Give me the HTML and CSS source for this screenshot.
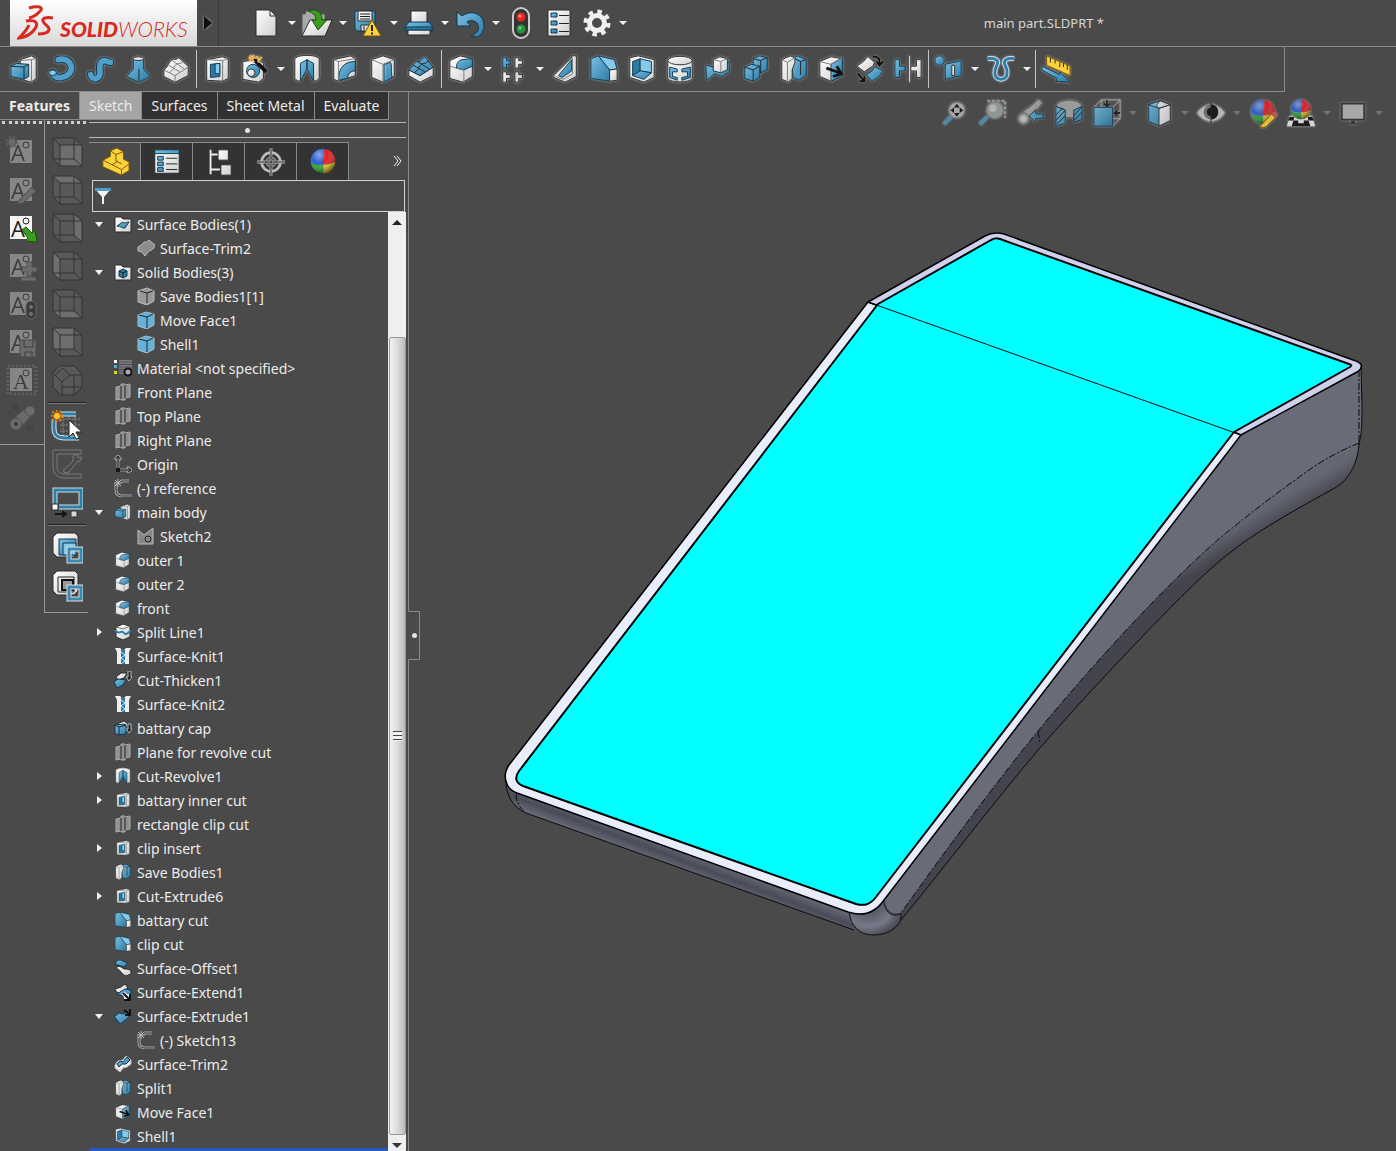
FILE: index.html
```html
<!DOCTYPE html>
<html lang="en">
<head>
<meta charset="utf-8">
<meta name="viewport" content="width=device-width, initial-scale=1">
<title>main part.SLDPRT *</title>
<link rel="stylesheet" href="styles.css">
</head>
<body>
<svg class="sprite" aria-hidden="true">
  <defs>
    <linearGradient id="steel" x1="0" y1="0" x2="1" y2="1"><stop offset="0" stop-color="#7cc0e2"/><stop offset="1" stop-color="#2b7ba6"/></linearGradient>
    <linearGradient id="paper" x1="0" y1="0" x2="1" y2="1"><stop offset="0" stop-color="#ffffff"/><stop offset="1" stop-color="#cfcfcf"/></linearGradient>
    <radialGradient id="shine" cx=".35" cy=".25" r=".8"><stop offset="0" stop-color="#fff" stop-opacity=".45"/><stop offset=".4" stop-color="#fff" stop-opacity="0"/><stop offset="1" stop-color="#000" stop-opacity=".6"/></radialGradient>
  </defs>
  <symbol id="new" viewBox="0 0 32 32"><path class="w" d="M6 3h14l6 6v20H6z"/><path class="w" d="M20 3v6h6z"/></symbol>
  <symbol id="open" viewBox="0 0 32 32"><path class="g" d="M1 29V7h3l1-3h7l2 3h10v5z"/><path class="w" d="M1 29L9 13h22l-7 16z"/><path class="green" d="M7 4c8-3 14 0 14 9h5l-9 10-6-10h4c0-5-3-7-8-9z"/></symbol>
  <symbol id="save" viewBox="0 0 32 32"><path class="b" d="M3 4h20v20H5l-2-2z"/><path class="w" d="M6 4h14v10H6zM9 18h9v6H9z"/><path class="k" d="M8 7h10M8 9.500h10M8 12h10M12 19v4"/><path class="y" d="M20 13l9 16H11z"/><path class="k thick" d="M20 18v6M20 25.500v2"/></symbol>
  <symbol id="print" viewBox="0 0 32 32"><path class="w" d="M8 4h16v13H8z"/><path class="b" d="M6 15h20l4 5v4H2v-4z"/><path class="w" d="M5 23h22v5H5z"/><path class="d" d="M3 20h26v3H3z"/></symbol>
  <symbol id="undo" viewBox="0 0 32 32"><path class="b" d="M3 5l5 4c10-7 22-2 22 10 0 5-3 9-7 11l-6-1c8-3 9-9 6-13-3-3-7-3-10-1l4 4H3z"/></symbol>
  <symbol id="traffic" viewBox="0 0 32 32"><rect x="8" y="1" width="16" height="30" rx="8" fill="#333" stroke="#ccc" stroke-width="2"/><circle cx="16" cy="10" r="4.500" fill="#e3261e"/><circle cx="16" cy="22" r="4.500" fill="#239440"/><circle cx="15" cy="9" r="1.500" fill="#ff9a8e"/><circle cx="15" cy="21" r="1.500" fill="#7ad090"/></symbol>
  <symbol id="options" viewBox="0 0 32 32"><path class="w" d="M5 3h22v26H5z"/><path class="b" d="M8 6h6v4H8zM8 14h6v4H8zM8 22h6v4H8z"/><path class="k" d="M16 8.500h10M16 16.500h10M16 24.500h10"/></symbol>
  <symbol id="gear" viewBox="0 0 32 32"><circle cx="16" cy="16" r="11" fill="none" stroke="#f0f0f0" stroke-width="5" stroke-dasharray="4.320 4.320"/><circle cx="16" cy="16" r="7.500" fill="none" stroke="#f0f0f0" stroke-width="5"/></symbol>

  <symbol id="extrude" viewBox="0 0 32 32"><path class="w" d="M12 6l12-4 5 3v21l-5 4-12-3z"/><path class="f" d="M24 30V6l5-1M24 6L12 7"/><path class="b" d="M2 13l6-3 13 1v13l-5 3-14-3z"/><path class="k" d="M2 13l14 1 5-3M16 14v13"/></symbol>
  <symbol id="revolve" viewBox="0 0 32 32"><path class="tube1" d="M12 6c16-4 20 17 3 19-4 1-8-1-9-5"/><path class="tube2" d="M12 6c16-4 20 17 3 19-4 1-8-1-9-5"/><ellipse class="l" cx="6" cy="20" rx="4" ry="3"/></symbol>
  <symbol id="sweep" viewBox="0 0 32 32"><path class="tube1" d="M6 22c1 6 10 6 10-2 0-5-2-12 5-13l6 2"/><path class="tube2" d="M6 22c1 6 10 6 10-2 0-5-2-12 5-13l6 2"/></symbol>
  <symbol id="loft" viewBox="0 0 32 32"><path class="b" d="M11 5h11v11l7 8-12 6-13-6 7-8z"/><ellipse class="w" cx="16.500" cy="5" rx="5.500" ry="2"/><path class="k" d="M17 29V16"/></symbol>
  <symbol id="boundary" viewBox="0 0 32 32"><path class="w" d="M3 17c5-3 5-9 9-11 4-1 3 1 7-2l10 9v10l-14 7L3 24z"/><path class="f" d="M3 17l12 6 14-9M15 23v7M8 12l12 7M12 7l13 9M9 20c6-4 4-9 10-10 4 0 4-2 5-2"/></symbol>
  <symbol id="cutextrude" viewBox="0 0 32 32"><path class="w" d="M5 6l17-3 6 2v21l-6 3-17-1z"/><path class="f" d="M5 6l17 1 6-2M22 7v22"/><path class="d" d="M9 11l10-1v14l-10 1z"/><path class="l" d="M14 10.500l5-.5v11h-5z"/></symbol>
  <symbol id="hole" viewBox="0 0 32 32"><path class="w" d="M3 8l16-2 6 4v16l-5 4-17-3z"/><circle class="b" cx="14" cy="18" r="7"/><circle class="w" cx="12" cy="20" r="4"/><path d="M14 5l14 14" stroke="#111" stroke-width="4"/><path d="M9 4h8M11 1l4 8M15 1l-5 7M18 2l2 5M23 3l-4 6" stroke="#f2b24d" stroke-width="2"/></symbol>
  <symbol id="cutrevolve" viewBox="0 0 32 32"><path class="w" d="M3 6c0-6 26-6 26 0v20c-2 2-4 3-6 3L16 14 9 29c-2 0-5-1-6-3z"/><path class="b" d="M9 10l7-4v10L9 29zM23 10l-7-4v10l7 13z"/></symbol>
  <symbol id="cutsweep" viewBox="0 0 32 32"><path class="w" d="M4 6l18-4 5 3v18l-9 3-9 3-5-2z"/><path class="b" d="M9 28C9 15 15 8 27 8v10c-5 0-8 3-8 8z"/><path class="f" d="M4 6l5 2 18-3M9 8v20"/></symbol>
  <symbol id="cutloft" viewBox="0 0 32 32"><path class="w" d="M4 6l12-4 12 4v18l-12 6-12-5z"/><path class="b" d="M17 11l7-2c2 3 0 11 2 16l-9 5z"/><path class="f" d="M4 6l12 5 12-5M16 11v19M20 10c2 6 0 12 1 17"/></symbol>
  <symbol id="cutboundary" viewBox="0 0 32 32"><path class="w" d="M3 17l12 6 14-9v9l-14 7-12-7z"/><path class="b" d="M3 17c5-3 5-9 9-9 4 1 5-3 8-5l9 11-14 9z"/><path class="k" d="M8 12l12 7M12 8l13 8M9 20c6-4 4-9 10-10 4 0 4-3 5-3"/></symbol>
  <symbol id="fillet" viewBox="0 0 32 32"><path class="w" d="M3 7l11-5 13 3v19l-10 6-14-4z"/><path class="b" d="M10 15c0-5 2-8 6-9l11-1v8l-9 4z"/><path class="f" d="M3 13l7 2 8 2v13"/></symbol>
  <symbol id="pattern" viewBox="0 0 32 32"><path class="b" d="M4 4h4v3h4v4H8v4H4z"/><path class="w" d="M17 4h4v3h4v4h-4v4h-4zM4 19h4v3h4v4H8v4H4zM17 19h4v3h4v4h-4v4h-4z"/></symbol>
  <symbol id="rib" viewBox="0 0 32 32"><path class="w" d="M3 23L22 4V2h5v22l-12 6-12-5z"/><path class="b" d="M8 23L22 6v12l-10 7z"/><path class="f" d="M23 4v17l-10 6-8-3"/></symbol>
  <symbol id="draft" viewBox="0 0 32 32"><path class="b" d="M2 5l8-3 12 15v12L2 26z"/><path class="l" d="M10 2l17 4 3 10-8 1z"/><path class="w" d="M22 17l8-1v12l-8 1z"/></symbol>
  <symbol id="shell" viewBox="0 0 32 32"><path class="w" d="M3 4l9-2 17 4v19l-11 5-15-5z"/><path class="d" d="M6 8l8-3v13l-8 5z"/><path class="l" d="M14 5l12 3v12l-12-2z"/><path class="b" d="M6 23l8-5 12 2-8 7z"/></symbol>
  <symbol id="wrap" viewBox="0 0 32 32"><path class="w" d="M3 7v19c3 5 23 5 26 0V7z"/><ellipse class="w" cx="16" cy="7" rx="13" ry="4.500"/><path class="b" d="M5 14l8 2v3H8v5l5 1v3l-8-3zM27 14l-9 2v3h6v5l-6 1v3l9-3z"/></symbol>
  <symbol id="intersect" viewBox="0 0 32 32"><path class="b" d="M3 12l9 2 8-2 8-4v11l-8 5-8-3-8 7z"/><path class="w" d="M11 6l7-3 8 2v12l-7 3-8-2z"/><path class="f" d="M11 6l8 2 7-3M19 8v12"/></symbol>
  <symbol id="combine" viewBox="0 0 32 32"><path class="b" d="M13 5l7-3 8 2v13l-7 3-8-2z"/><path class="b" d="M4 14l7-3 9 2v12l-7 4-9-3z"/><path class="k" d="M13 5l8 2 7-3M21 7v13M4 14l9 3 7-4M13 17v12"/></symbol>
  <symbol id="split" viewBox="0 0 32 32"><path class="b" d="M13 5l7-3 9 4v17l-8 5-6-3z"/><path class="w" d="M3 6l9-4 5 2v5l-3 8v9l-4 4-7-3z"/><path class="k" d="M17 5l6 3 6-2M23 8v14"/><path class="f" d="M3 6l6 3 8-5M9 9v21"/></symbol>
  <symbol id="moveface" viewBox="0 0 32 32"><path class="w" d="M3 8l12-5 12 2v18l-12 6-12-5z"/><path class="b" d="M15 11l12-7v19l-12 6z"/><path class="f" d="M3 8l12 3 12-7M15 11v18"/><path d="M10 15l14 5M21 13l5 8-9 3" fill="none" stroke="#111" stroke-width="3"/></symbol>
  <symbol id="flex" viewBox="0 0 32 32"><path class="w" d="M2 13l7-5c2-1 3-5 5-5l7 6c-2 2-1 5-4 5l-7 5z"/><path class="b" d="M12 22l5-3c3-1 2-5 5-5l8 4c-3 2-3 6-6 7l-6 4z"/><path d="M19 3c5-1 8 2 7 8M23 8l3 4 4-4M3 21l7 8M10 24v5H5" fill="none" stroke="#111" stroke-width="2"/></symbol>
  <symbol id="mirror" viewBox="0 0 32 32"><path class="b" d="M2 6h5v7h6v5H7v7H2z"/><path class="w" d="M30 6h-5v7h-6v5h6v7h5z"/><path class="k" d="M16 2v28"/><path d="M17.500 2v28" stroke="#ddd"/></symbol>
  <symbol id="refgeo" viewBox="0 0 32 32"><circle class="b" cx="6" cy="7" r="5"/><path class="b" d="M12 11l17-4v16l-17 4z"/><path class="w" d="M19 12h3v11h-3z"/></symbol>
  <symbol id="curves" viewBox="0 0 32 32"><path class="c1" d="M2 5c7-1 12 1 10 6-3 6-5 15 4 16 9-1 7-10 4-16-2-5 3-7 10-6"/><path class="c2" d="M2 5c7-1 12 1 10 6-3 6-5 15 4 16 9-1 7-10 4-16-2-5 3-7 10-6"/></symbol>
  <symbol id="instant" viewBox="0 0 32 32"><path class="y" d="M6 2l25 11v10L6 12z"/><path class="k" d="M10 4v5M15 6v4M20 9v5M24 10v4M28 12v5"/><path class="b" d="M1 13l19 9v-3l11 11-15-1 1-3L1 17z"/></symbol>

  <symbol id="zoomfit" viewBox="0 0 32 32"><path d="M4 28l8-8" stroke="#4c98bd" stroke-width="4"/><circle cx="18" cy="13" r="8.500" fill="#b8b8b8" stroke="#777"/><path class="kf" d="M18 6l3 4h-6zM18 20l3-4h-6zM11 13l4-3v6zM25 13l-4-3v6z"/></symbol>
  <symbol id="zoomarea" viewBox="0 0 32 32"><path d="M10 3h19v18" fill="none" stroke="#aaa" stroke-width="2" stroke-dasharray="3 2"/><path d="M2 28l8-8" stroke="#4c98bd" stroke-width="4"/><circle cx="18" cy="13" r="9" fill="#9ba5a2" stroke="#777"/><circle cx="16" cy="11" r="4" fill="#c2c8c6"/></symbol>
  <symbol id="prevview" viewBox="0 0 32 32"><path class="g" d="M3 18L19 6l5-5 4 4-4 6-4 2-10 14z"/><circle class="g" cx="8" cy="22" r="6"/><circle cx="8" cy="22" r="3" fill="#ccc"/><path class="b" d="M14 19l7-6v4h8v5h-8v4z"/></symbol>
  <symbol id="section" viewBox="0 0 32 32"><path class="g" d="M2 9c3-9 25-9 28 0l-8 4v8H11v-9z"/><path class="b" d="M2 9l10 4v14l-10 3zM21 13l9-4v14l-9 3z"/><path class="k" d="M2 18l7-7M2 24l10-11M3 28l9-9M21 19l8-9M21 24l9-9"/></symbol>
  <symbol id="vieworient" viewBox="0 0 32 32"><path class="wire hi" d="M2 10L10 2h20v20l-8 8M10 2v8M22 10l8-8M22 22h8"/><path class="b" d="M2 10h20v20H2z"/><path class="k thick" d="M16 2v7M13 6l3 3 3-3M30 16h-6M27 13l-3 3 3 3"/></symbol>
  <symbol id="display" viewBox="0 0 32 32"><path class="b" d="M5 7l12-4 11 4v17l-11 6-12-5z"/><path class="w" d="M16 11l12-4v17l-12 6z"/><path class="l" d="M5 7l12-4 11 4-12 4z"/><path class="w" d="M17 3l11 4-12 4-3-3z"/></symbol>
  <symbol id="eye" viewBox="0 0 32 32"><path d="M1 16C9 4 23 4 31 16 23 28 9 28 1 16z" fill="#ccc" stroke="#888"/><circle cx="16" cy="15" r="8" fill="#777"/><circle cx="16" cy="15" r="4.500" fill="#111"/><path class="kf" d="M16 7c10 0 10 16 0 16z"/><path class="k" d="M16 4v25"/></symbol>
  <symbol id="sphere" viewBox="0 0 32 32"><path fill="#2f62d0" d="M18 2A13 13 0 0 0 3 17q6 3 13 2Q15 10 18 2z"/><path fill="#e31c23" d="M18 2A13 13 0 0 1 29 16q-6 3-13 3Q15 10 18 2z"/><path fill="#25a52f" d="M3 17A13 13 0 0 0 16 28q1-4 0-9-7 1-13-2z"/><path fill="#e8cb25" d="M29 16A13 13 0 0 1 16 28q1-4 0-9 7 0 13-3z"/><circle cx="16" cy="15" r="13" fill="url(#shine)"/></symbol>
  <symbol id="appearance" viewBox="0 0 32 32"><use href="#sphere"/><path class="y" d="M14 29l11-12 4 4-10 10-6 1z"/><path fill="#d8584a" d="M25 17l3-3 4 4-3 3z"/></symbol>
  <symbol id="scene" viewBox="0 0 32 32"><path fill="#eee" d="M4 19h24l3 11H1z"/><path class="kf" d="M4 20h5l-1 4H2zM23 20h5l2 4h-6zM8 24h5v6H6zM19 24h5l2 6h-7zM13 27h6v3h-6z"/><use href="#sphere" x="3" y="0" width="26" height="26"/></symbol>
  <symbol id="monitor" viewBox="0 0 32 32"><path d="M4 6h24v17H4z" fill="#b8b8b8" stroke="#333" stroke-width="2"/><path fill="#333" d="M14 24h4v3h3v1H11v-1h3z"/></symbol>

  <symbol id="note" viewBox="0 0 32 32"><path class="wp" d="M4 4h22v23H4z"/><circle class="k" cx="20" cy="9" r="3"/></symbol>
  <symbol id="spark" viewBox="0 0 32 32"><circle cx="6" cy="6" r="4" class="g"/><circle cx="6" cy="6" r="5" fill="none" stroke="#888" stroke-width="2" stroke-dasharray="2 2"/></symbol>
  <symbol id="pencil" viewBox="0 0 32 32"><path class="g" d="M12 27l14-14 4 4-13 12-6 1z"/></symbol>
  <symbol id="garrow" viewBox="0 0 32 32"><path class="green" d="M16 18l4-3 6 6 3-3 2 12-12-1 3-3z"/></symbol>
  <symbol id="plusminus" viewBox="0 0 32 32"><path class="g" d="M21 12h5v5h5v5h-5v4h-5v-4h-5v-5h5zM15 27h15v4H15z"/></symbol>
  <symbol id="link" viewBox="0 0 32 32"><rect x="20" y="13" width="10" height="18" rx="5" fill="#222" stroke="#999"/><circle fill="#bbb" cx="25" cy="19" r="2"/><circle fill="#bbb" cx="25" cy="26" r="2"/></symbol>
  <symbol id="disk" viewBox="0 0 32 32"><path class="g" d="M14 14h16v17H16l-2-2z"/><path class="k" d="M18 14v7h9v-7M19 31v-5h7v5"/></symbol>
  <symbol id="stamp" viewBox="0 0 32 32"><path d="M2 2h28v28H2z" fill="none" stroke="#888" stroke-width="3" stroke-dasharray="2 2"/></symbol>
  <symbol id="explode" viewBox="0 0 32 32"><path class="k" d="M3 12l7-7M6 4h5v5M30 20l-7 7M27 28h-5v-5"/><path class="g" d="M7 17L22 4l5 8L14 26z"/><circle class="g" cx="24" cy="9" r="5"/><circle class="g" cx="10" cy="22" r="6"/><circle class="kf" cx="10" cy="22" r="2"/></symbol>
  <symbol id="cube" viewBox="0 0 32 32"><path fill="#aaa" fill-opacity=".3" d="M2 2h21l8 7v21H9l-7-7z"/><path class="wire" d="M2 2h21v21H2zM9 9h22v21H9zM2 2l7 7M23 2l8 7M2 23l7 7M23 23l8 7"/></symbol>
  <symbol id="isocube" viewBox="0 0 32 32"><path fill="#aaa" fill-opacity=".3" d="M8 2h15l8 8v13l-8 8H10l-8-8V9z"/><path class="wire" d="M8 2h15l8 8v13l-8 8H10l-8-8V9zM12 4l7 7-8 7-7-7zM19 11h12M11 18v13M23 11v12h8M11 23h12v8"/></symbol>
  <symbol id="sketch" viewBox="0 0 32 32"><path d="M9 9h20M9 15h20M9 21h20M12 6v20M18 6v20M24 6v20" stroke="#888" stroke-dasharray="2 1"/><path class="c1" d="M3 10v8c0 7 3 10 11 10h14M10 4h15"/><path class="c2" d="M3 10v8c0 7 3 10 11 10h14M10 4h15"/><circle cx="6" cy="6" r="5.500" fill="none" stroke="#e08a12" stroke-width="2" stroke-dasharray="2 2"/><circle cx="6" cy="6" r="3.500" fill="#ffc534" stroke="#c76a00"/><path d="M18 10v17l4-4 3 6 3-1-3-6h6z" fill="#fff" stroke="#222"/></symbol>
  <symbol id="repair" viewBox="0 0 32 32"><path class="wire lite" d="M30 2H2v16c0 8 4 12 12 12h16v-4H15c-6 0-9-2-9-8V6h24zM12 22l2 3 4-1 8-10 3-1 2-4-4 1-1-4-4 2v5l-8 8z"/></symbol>
  <symbol id="rapid" viewBox="0 0 32 32"><path class="c1" d="M4 18V4h26v17H8"/><path class="c2" d="M4 18V4h26v17H8"/><path class="w" d="M1 18h6v6H1zM20 25h6v6h-6z"/><path class="kf" d="M4 27h7v-3l6 4-6 4v-3H4z"/></symbol>
  <symbol id="group1" viewBox="0 0 32 32"><path class="w" d="M2 5l4-4h18l3 3v17l-4 4H6l-4-4z"/><path class="b" d="M8 7h17v16H8z"/><path class="l" d="M12 11h13v12H12z"/><path class="c4" d="M18 17h12v12H18z"/><path class="c3" d="M18 17h12v12H18z"/></symbol>
  <symbol id="group2" viewBox="0 0 32 32"><path class="w" d="M2 5l4-4h18l3 3v17l-4 4H6l-4-4z"/><path class="k" d="M7 7h16v15H7z"/><path fill="#999" stroke="#111" stroke-width="2" d="M11 10h11v10H11z"/><path class="c4" d="M18 17h12v12H18z"/><path class="c3" d="M18 17h12v12H18z"/></symbol>

  <symbol id="part" viewBox="0 0 32 32"><path class="y" d="M3 14l8-4V4l7-3 7 4v8l6 3v9l-8 5-20-9z"/><path d="M3 14l10 5 6-4M13 19l10 5 8-6M23 24v6M11 4l6 4 8-3M17 8v7l6 3" fill="none" stroke="#7a5300"/></symbol>
  <symbol id="props" viewBox="0 0 32 32"><path class="w" d="M3 4h26v24H3z"/><path class="b" d="M3 3h26v4H3zM6 10h6v4H6zM6 16h6v4H6zM6 22h6v4H6z"/><path class="k" d="M15 12h12M15 18h12M15 24h12"/></symbol>
  <symbol id="config" viewBox="0 0 32 32"><path d="M7 3v26M7 8h8M7 24h10" fill="none" stroke="#eee" stroke-width="2"/><path class="w" d="M15 3h11v11H15zM18 19h11v11H18z"/></symbol>
  <symbol id="target" viewBox="0 0 32 32"><path d="M16 1v30M1 16h30" stroke="#bbb" stroke-width="3"/><circle cx="16" cy="16" r="10" fill="none" stroke="#bbb" stroke-width="3"/><circle cx="16" cy="16" r="5" fill="none" stroke="#888" stroke-width="2"/><path class="k" d="M16 1v30M1 16h30"/></symbol>

  <symbol id="fsurf" viewBox="0 0 18 18"><path class="w" d="M1 2h6l2 2h8v13H1z"/><path class="b" d="M3 11l6-4c2 2 3 0 6 0l-4 6c-2 1-4-2-8-2z"/></symbol>
  <symbol id="fsolid" viewBox="0 0 18 18"><path class="w" d="M1 2h6l2 2h8v13H1z"/><path class="d" d="M5 8l4-2 4 2v5l-4 2-4-2z"/><path class="k" d="M5 8l4 2 4-2M9 10v5"/></symbol>
  <symbol id="gsurf" viewBox="0 0 18 18"><path d="M1 8c3-2 4-3 6-5 2 0 3 0 5-2l6 5c-1 4-3 5-6 6l-4 5-3-4-4-1z" fill="#8d8d8d" stroke="#b8b8b8"/></symbol>
  <symbol id="gbody" viewBox="0 0 18 18"><path d="M1 4l9-3 7 3v10l-7 4-9-3z" fill="#999" stroke="#bbb"/><path class="k" d="M3 4l7 2 6-2M10 6v10"/></symbol>
  <symbol id="bbody" viewBox="0 0 18 18"><path d="M1 4l8-3 8 2v11l-7 4-9-3z" fill="#62b2dc" stroke="#a9bcc6"/><path class="k" d="M2 4l8 2 6-3M10 6v11"/></symbol>
  <symbol id="material" viewBox="0 0 18 18"><path d="M5 3h13M5 8h13M5 13h7" stroke="#aaa" stroke-width="3"/><path d="M5 3h13M5 8h13M5 13h7" stroke="#222"/><path fill="#fff" d="M0 1h3v3H0z"/><path fill="#58a9d6" d="M0 6h3v3H0z"/><path fill="#ecd12c" d="M0 12h3v3H0z"/><circle cx="14" cy="13" r="3.500" fill="#aaa" stroke="#111" stroke-width="2"/></symbol>
  <symbol id="plane" viewBox="0 0 18 18"><path d="M2 4l5-1V1h4v1l5-1v13l-5 1v2H7v-1l-5 1z" fill="#8f8f8f" stroke="#aaa"/><path class="k" d="M7 3v13M11 2v13"/></symbol>
  <symbol id="origin" viewBox="0 0 18 18"><path d="M4 1v14h13M1 5l3-4 3 4M13 12l4 3-4 3" fill="none" stroke="#999" stroke-width="3"/><path d="M4 1v14h13M2 4l2-3 2 3M14 13l3 2-3 2" fill="none" stroke="#1a1a1a"/><path d="M2 13h4v4H2z" class="kf"/></symbol>
  <symbol id="gsketch" viewBox="0 0 18 18"><path d="M2 5v6c0 5 3 6 7 6h9M7 2h8" fill="none" stroke="#aaa" stroke-width="3"/><path d="M2 5v6c0 5 3 6 7 6h9M7 2h8" fill="none" stroke="#333"/><path d="M1 1l6 6M7 1L1 7M4 0v8M0 4h8" fill="none" stroke="#bbb"/></symbol>
  <symbol id="gsketch2" viewBox="0 0 18 18"><path d="M1 3l6 5 9-7v16H1z" fill="#888" stroke="#bbb"/><circle class="k" cx="11" cy="12" r="3"/></symbol>
  <symbol id="splitline" viewBox="0 0 18 18"><path class="w" d="M2 4l7-3 7 2v11l-7 3-7-3z"/><path d="M1 7c4 6 6-1 9 3 2 3 4-1 7-2" fill="none" stroke="#2c7ba4" stroke-width="2"/><path class="f" d="M2 4l7 2 7-3"/></symbol>
  <symbol id="knit" viewBox="0 0 18 18"><path fill="#eee" d="M1 1h5l3 3 3-3h5l-2 4v12H3V5z"/><path fill="#2c7ba4" d="M7 3h4v14H7z"/><path d="M7 5l4 3-4 3 4 3-4 3" fill="none" stroke="#cfe6f2"/></symbol>
  <symbol id="thicken" viewBox="0 0 18 18"><path class="w" d="M2 6l5-4h6l-3 5-6 2z"/><path class="b" d="M0 11l4-3 8 1-3 5-6 3z"/><path d="M14 0h3v6h1l-3 4-3-4h2z" fill="#222" stroke="#bbb"/></symbol>
  <symbol id="cap" viewBox="0 0 18 18"><path class="w" d="M3 5l7-3 4 3-2 6H3z"/><path class="b" d="M1 6l9-1 2 1v9l-8 1-3-2z"/><path class="k" d="M1 6l4 2 7-2M5 8v8"/><path d="M14 5h3v5h1l-3 4-3-4h2z" fill="#222" stroke="#bbb"/></symbol>
  <symbol id="offset" viewBox="0 0 18 18"><path class="b" d="M1 5c2-4 4-5 8-3l5 2-4 4z"/><path class="w" d="M2 9c3-3 5-1 8 1 3 0 5 0 7 2v3l-5 2c-4-1-5-6-10-8z"/></symbol>
  <symbol id="extend" viewBox="0 0 18 18"><path class="w" d="M1 6l6-2 4-3 3 4-6 4-5 1z"/><path class="b" d="M3 11l8-5 6 1v5l-5 2z"/><path d="M9 10l6 6M15 11v5h-5" fill="none" stroke="#eee" stroke-width="4"/><path d="M9 10l7 7M16 11v6h-6" fill="none" stroke="#111" stroke-width="2"/></symbol>
  <symbol id="sextrude" viewBox="0 0 18 18"><path class="b" d="M0 9c3 0 3-2 5-3l5 1 3-3 3 4-4 5c-2 0-3 3-6 4z"/><path d="M10 3l6 5M16 2v6h-5" fill="none" stroke="#111" stroke-width="2"/></symbol>
  <symbol id="trim" viewBox="0 0 18 18"><path d="M1 10l3-4 5-1 3-4 5 4v4l-4 3-4 1-3 4-5-4z" fill="#eee" stroke="#bbb"/><path class="b" d="M3 9l3-3 3 1 4-5 3 3-4 4H8l-3 3z"/></symbol>
</svg>

<header class="titlebar">
  <div class="logo">
    <svg class="logo-mark" viewBox="0 0 36 36" aria-hidden="true"><path d="M12 3c6-2 14-2 12 2-2 3-7 7-12 8M9 16c11-2 13 3 8 9-3 4-8 7-15 8 5-5 8-8 10-13M36 13c-7-1-11 0-10 3 1 4 7 5 6 9-1 3-6 4-11 4" fill="none" stroke="#d8291f" stroke-width="3"/></svg>
    <span class="logo-text"><b>SOLID</b>WORKS</span>
  </div>
  <button class="flyout" aria-label="Show menu"></button>
  <nav class="quick" aria-label="Quick access">
    <button class="q" aria-label="New"><svg><use href="#new"/></svg></button><button class="caret wide" aria-label="New options"></button>
    <button class="q" aria-label="Open"><svg><use href="#open"/></svg></button><button class="caret wide" aria-label="Open options"></button>
    <button class="q" aria-label="Save"><svg><use href="#save"/></svg></button><button class="caret wide" aria-label="Save options"></button>
    <button class="q" aria-label="Print"><svg><use href="#print"/></svg></button><button class="caret wide" aria-label="Print options"></button>
    <button class="q" aria-label="Undo"><svg><use href="#undo"/></svg></button><button class="caret wide" aria-label="Undo options"></button>
    <button class="q solo" aria-label="Rebuild"><svg><use href="#traffic"/></svg></button>
    <button class="q solo" aria-label="File properties"><svg><use href="#options"/></svg></button>
    <button class="q" aria-label="Options"><svg><use href="#gear"/></svg></button><button class="caret wide" aria-label="More options"></button>
  </nav>
  <h1 class="doc">main part.SLDPRT *</h1>
</header>

<div class="ribbon-row">
<nav class="ribbon" aria-label="Features toolbar">
  <button class="t" aria-label="Extruded boss"><svg><use href="#extrude"/></svg></button>
  <button class="t" aria-label="Revolved boss"><svg><use href="#revolve"/></svg></button>
  <button class="t" aria-label="Swept boss"><svg><use href="#sweep"/></svg></button>
  <button class="t" aria-label="Lofted boss"><svg><use href="#loft"/></svg></button>
  <button class="t" aria-label="Boundary boss"><svg><use href="#boundary"/></svg></button>
  <i class="sep"></i>
  <button class="t" aria-label="Extruded cut"><svg><use href="#cutextrude"/></svg></button>
  <button class="t" aria-label="Hole wizard"><svg><use href="#hole"/></svg></button><button class="caret" aria-label="Hole options"></button>
  <button class="t" aria-label="Revolved cut"><svg><use href="#cutrevolve"/></svg></button>
  <button class="t" aria-label="Swept cut"><svg><use href="#cutsweep"/></svg></button>
  <button class="t" aria-label="Lofted cut"><svg><use href="#cutloft"/></svg></button>
  <button class="t" aria-label="Boundary cut"><svg><use href="#cutboundary"/></svg></button>
  <i class="sep"></i>
  <button class="t" aria-label="Fillet"><svg><use href="#fillet"/></svg></button><button class="caret" aria-label="Fillet options"></button>
  <button class="t" aria-label="Linear pattern"><svg><use href="#pattern"/></svg></button><button class="caret" aria-label="Pattern options"></button>
  <button class="t" aria-label="Rib"><svg><use href="#rib"/></svg></button>
  <button class="t" aria-label="Draft"><svg><use href="#draft"/></svg></button>
  <button class="t" aria-label="Shell"><svg><use href="#shell"/></svg></button>
  <button class="t" aria-label="Wrap"><svg><use href="#wrap"/></svg></button>
  <button class="t" aria-label="Intersect"><svg><use href="#intersect"/></svg></button>
  <button class="t" aria-label="Combine"><svg><use href="#combine"/></svg></button>
  <button class="t" aria-label="Split"><svg><use href="#split"/></svg></button>
  <button class="t" aria-label="Move face"><svg><use href="#moveface"/></svg></button>
  <button class="t" aria-label="Flex"><svg><use href="#flex"/></svg></button>
  <button class="t" aria-label="Mirror"><svg><use href="#mirror"/></svg></button>
  <i class="sep"></i>
  <button class="t" aria-label="Reference geometry"><svg><use href="#refgeo"/></svg></button><button class="caret" aria-label="Geometry options"></button>
  <button class="t" aria-label="Curves"><svg><use href="#curves"/></svg></button><button class="caret" aria-label="Curve options"></button>
  <i class="sep"></i>
  <button class="t" aria-label="Instant3D"><svg><use href="#instant"/></svg></button>
</nav>
</div>

<div class="work">
  <aside class="side">
    <div class="tabs">
      <button class="tab active">Features</button><button class="tab hover">Sketch</button><button class="tab">Surfaces</button><button class="tab">Sheet Metal</button><button class="tab">Evaluate</button>
    </div>
    <div class="docks">
      <div class="dock first">
        <button class="v off" aria-label="New note"><svg><use href="#note"/><text x="5" y="25" class="glyph">A</text><use href="#spark"/></svg></button>
        <button class="v off" aria-label="Edit note"><svg><use href="#note"/><text x="5" y="25" class="glyph">A</text><use href="#pencil"/></svg></button>
        <button class="v" aria-label="Insert note"><svg><use href="#note"/><text x="5" y="25" class="glyph">A</text><use href="#garrow"/></svg></button>
        <button class="v off" aria-label="Add or remove"><svg><use href="#note"/><text x="5" y="25" class="glyph">A</text><use href="#plusminus"/></svg></button>
        <button class="v off" aria-label="Link note"><svg><use href="#note"/><text x="5" y="25" class="glyph">A</text><use href="#link"/></svg></button>
        <button class="v off" aria-label="Save note"><svg><use href="#note"/><text x="5" y="25" class="glyph">A</text><use href="#disk"/></svg></button>
        <button class="v off" aria-label="Note block"><svg><use href="#note"/><text x="7" y="25" class="glyph serif">A</text><use href="#stamp"/></svg></button>
        <button class="v off" aria-label="Explode"><svg><use href="#explode"/></svg></button>
      </div>
      <div class="dock second">
        <button class="v off" aria-label="Front view"><svg><path fill="#888" d="M9 9h22v21H9z"/><use href="#cube"/></svg></button>
        <button class="v off" aria-label="Top view"><svg><path fill="#888" d="M2 2h21l8 7H9z"/><use href="#cube"/></svg></button>
        <button class="v off" aria-label="Right view"><svg><path fill="#888" d="M23 2l8 7v21l-8-7z"/><use href="#cube"/></svg></button>
        <button class="v off" aria-label="Left view"><svg><path fill="#888" d="M2 2l7 7v21l-7-7z"/><use href="#cube"/></svg></button>
        <button class="v off" aria-label="Bottom view"><svg><path fill="#888" d="M2 23h21l8 7H9z"/><use href="#cube"/></svg></button>
        <button class="v off" aria-label="Back view"><svg><path fill="#888" d="M2 2h21v21H2z"/><use href="#cube"/></svg></button>
        <button class="v off" aria-label="Isometric view"><svg><use href="#isocube"/></svg></button>
        <hr>
        <button class="v" aria-label="Sketch"><svg><use href="#sketch"/></svg></button>
        <button class="v off" aria-label="Repair sketch"><svg><use href="#repair"/></svg></button>
        <button class="v" aria-label="Rapid sketch"><svg><use href="#rapid"/></svg></button>
        <hr>
        <button class="v" aria-label="Solid display"><svg><use href="#group1"/></svg></button>
        <button class="v" aria-label="Outline display"><svg><use href="#group2"/></svg></button>
      </div>
      <section class="panel">
        <div class="grip"><i class="dot"></i></div>
        <div class="ptabs">
          <button class="ptab on" aria-label="Feature tree"><svg><use href="#part"/></svg></button>
          <button class="ptab" aria-label="Properties"><svg><use href="#props"/></svg></button>
          <button class="ptab" aria-label="Configurations"><svg><use href="#config"/></svg></button>
          <button class="ptab" aria-label="Dimensions"><svg><use href="#target"/></svg></button>
          <button class="ptab" aria-label="Display"><svg><use href="#sphere"/></svg></button>
          <button class="more" aria-label="More tabs"><svg viewBox="0 0 10 12"><path d="M1 1l4 5-4 5M4 1l4 5-4 5"/></svg></button>
        </div>
        <label class="filter"><svg viewBox="0 0 16 18" aria-hidden="true"><path d="M1 3l6 7v7h2v-7l6-7z" fill="#f4f4f4"/><path d="M0 1h16v3H0z" fill="#4f9dc6"/></svg><input type="text" aria-label="Filter"></label>
        <div class="list">
          <ul class="tree">
            <li><button class="tw down" aria-label="Collapse"></button><svg><use href="#fsurf"/></svg><span>Surface Bodies(1)</span></li>
            <li class="sub"><svg><use href="#gsurf"/></svg><span>Surface-Trim2</span></li>
            <li><button class="tw down" aria-label="Collapse"></button><svg><use href="#fsolid"/></svg><span>Solid Bodies(3)</span></li>
            <li class="sub"><svg><use href="#gbody"/></svg><span>Save Bodies1[1]</span></li>
            <li class="sub"><svg><use href="#bbody"/></svg><span>Move Face1</span></li>
            <li class="sub"><svg><use href="#bbody"/></svg><span>Shell1</span></li>
            <li><svg><use href="#material"/></svg><span>Material &lt;not specified&gt;</span></li>
            <li><svg><use href="#plane"/></svg><span>Front Plane</span></li>
            <li><svg><use href="#plane"/></svg><span>Top Plane</span></li>
            <li><svg><use href="#plane"/></svg><span>Right Plane</span></li>
            <li><svg><use href="#origin"/></svg><span>Origin</span></li>
            <li><svg><use href="#gsketch"/></svg><span>(-) reference</span></li>
            <li><button class="tw down" aria-label="Collapse"></button><svg><use href="#extrude"/></svg><span>main body</span></li>
            <li class="sub"><svg><use href="#gsketch2"/></svg><span>Sketch2</span></li>
            <li><svg><use href="#fillet"/></svg><span>outer 1</span></li>
            <li><svg><use href="#fillet"/></svg><span>outer 2</span></li>
            <li><svg><use href="#fillet"/></svg><span>front</span></li>
            <li><button class="tw" aria-label="Expand"></button><svg><use href="#splitline"/></svg><span>Split Line1</span></li>
            <li><svg><use href="#knit"/></svg><span>Surface-Knit1</span></li>
            <li><svg><use href="#thicken"/></svg><span>Cut-Thicken1</span></li>
            <li><svg><use href="#knit"/></svg><span>Surface-Knit2</span></li>
            <li><svg><use href="#cap"/></svg><span>battary cap</span></li>
            <li><svg><use href="#plane"/></svg><span>Plane for revolve cut</span></li>
            <li><button class="tw" aria-label="Expand"></button><svg><use href="#cutrevolve"/></svg><span>Cut-Revolve1</span></li>
            <li><button class="tw" aria-label="Expand"></button><svg><use href="#cutextrude"/></svg><span>battary inner cut</span></li>
            <li><svg><use href="#plane"/></svg><span>rectangle clip cut</span></li>
            <li><button class="tw" aria-label="Expand"></button><svg><use href="#cutextrude"/></svg><span>clip insert</span></li>
            <li><svg><use href="#split"/></svg><span>Save Bodies1</span></li>
            <li><button class="tw" aria-label="Expand"></button><svg><use href="#cutextrude"/></svg><span>Cut-Extrude6</span></li>
            <li><svg><use href="#draft"/></svg><span>battary cut</span></li>
            <li><svg><use href="#draft"/></svg><span>clip cut</span></li>
            <li><svg><use href="#offset"/></svg><span>Surface-Offset1</span></li>
            <li><svg><use href="#extend"/></svg><span>Surface-Extend1</span></li>
            <li><button class="tw down" aria-label="Collapse"></button><svg><use href="#sextrude"/></svg><span>Surface-Extrude1</span></li>
            <li class="sub"><svg><use href="#gsketch"/></svg><span>(-) Sketch13</span></li>
            <li><svg><use href="#trim"/></svg><span>Surface-Trim2</span></li>
            <li><svg><use href="#split"/></svg><span>Split1</span></li>
            <li><svg><use href="#moveface"/></svg><span>Move Face1</span></li>
            <li><svg><use href="#shell"/></svg><span>Shell1</span></li>
          </ul>
          <div class="scroll" aria-hidden="true"><i class="up"></i><div class="thumb"><i></i></div><i class="dn"></i></div>
        </div>
      </section>
    </div>
  </aside>

  <main class="view">
    <svg class="model" viewBox="409 92 987 1059" preserveAspectRatio="xMidYMid meet" role="img" aria-label="Part model">
      <defs>
        <linearGradient id="under" gradientUnits="userSpaceOnUse" x1="688" y1="852" x2="680" y2="873"><stop offset="0" stop-color="#666876"/><stop offset=".45" stop-color="#4a4b58"/><stop offset="1" stop-color="#6f717e"/></linearGradient>
        <linearGradient id="belly" gradientUnits="userSpaceOnUse" x1="1270" y1="484" x2="1290" y2="518"><stop offset="0" stop-color="#696b78"/><stop offset=".5" stop-color="#62646f"/><stop offset="1" stop-color="#44444e"/></linearGradient>
        <radialGradient id="knob" gradientUnits="userSpaceOnUse" cx="868" cy="900" r="38"><stop offset=".3" stop-color="#555764"/><stop offset=".7" stop-color="#777988"/><stop offset="1" stop-color="#454651"/></radialGradient>
      </defs>
      <path fill="url(#under)" d="M506 778c0 14 6 29 20 35l328 117 20-22L540 780z"/>
      <path fill="url(#belly)" d="M884 900L1241 435l120-69 1 41c0 22-1 29-3 37-2 25-14 39-26 45-25 14-55 30-83 49-32 22-51 41-80 70-45 46-90 94-131 141-46 54-92 115-138 171z"/>
      <path fill="#696b78" d="M884 900L1241 435l119-68-1 76c-24 10-43 21-61 35-31 22-56 42-78 60-60 52-129 129-182 193-50 62-95 123-137 182-8 2-15-2-17-13z"/>
      <path fill="url(#knob)" stroke="#111" d="M849 912c2 14 10 23 24 23 14 0 24-6 28-15v-7c-8 6-17-1-17-13-9 14-20 15-35 12z"/>
      <path fill="#e8ecfb" stroke="#000" stroke-width="1.500" d="M868 302L509 765c-7 10-4 24 8 28l331 119c15 5 27 1 36-12l357-465-7-3z"/>
      <path fill="#cfd0ec" stroke="#000" stroke-width="1.500" d="M868 302l117-66c7-4 12-4 19-2l349 126c10 3 11 7 4 12l-116 63-7-3z"/>
      <path fill="#0ff" stroke="#000" stroke-width="2" stroke-linejoin="round" d="M878 304l113-64c4-2 5-2 9-1l349 125c3 1 3 1 1 3l-116 65-358 465c-6 8-12 9-20 7L523 786c-7-3-9-8-4-15z"/>
      <path class="edge" d="M868 302l373 133M1361 366l1 41c0 22-1 29-3 37-2 25-14 39-26 45-25 14-55 30-83 49-32 22-51 41-80 70-45 46-90 94-131 141-46 54-92 115-138 171M506 780c0 14 6 27 20 33l328 117"/>
      <path class="edge dash" d="M1359 443c-24 10-43 21-61 35-31 22-56 42-78 60-60 52-129 129-182 193-50 62-95 123-137 182M1359 370v75M1038 731l2 12M516 794c0 8 4 15 10 19"/>
    </svg>
    <nav class="heads-up" aria-label="View toolbar">
      <button class="t" aria-label="Zoom to fit"><svg><use href="#zoomfit"/></svg></button>
      <button class="t" aria-label="Zoom to area"><svg><use href="#zoomarea"/></svg></button>
      <button class="t" aria-label="Previous view"><svg><use href="#prevview"/></svg></button>
      <button class="t" aria-label="Section view"><svg><use href="#section"/></svg></button>
      <button class="t" aria-label="View orientation"><svg><use href="#vieworient"/></svg></button><button class="caret" aria-label="Orientation options"></button>
      <button class="t" aria-label="Display style"><svg><use href="#display"/></svg></button><button class="caret" aria-label="Display options"></button>
      <button class="t" aria-label="Hide or show"><svg><use href="#eye"/></svg></button><button class="caret" aria-label="Hide options"></button>
      <button class="t" aria-label="Edit appearance"><svg><use href="#appearance"/></svg></button>
      <button class="t" aria-label="Apply scene"><svg><use href="#scene"/></svg></button><button class="caret" aria-label="Scene options"></button>
      <button class="t" aria-label="View settings"><svg><use href="#monitor"/></svg></button><button class="caret" aria-label="View options"></button>
    </nav>
    <button class="handle" aria-label="Collapse panel"><i class="dot"></i></button>
  </main>
</div>
</body>
</html>
```
FILE: styles.css
```css
* { box-sizing: border-box; }
body {
  margin: 0;
  min-height: 100vh;
  display: flex;
  flex-direction: column;
  background: #4a4a4a;
  color: #ececec;
  font-family: "Noto Sans", "Open Sans", sans-serif;
  font-size: 14px;
}
button { border: 0; padding: 0; margin: 0; background: none; color: inherit; font: inherit; }
.sprite { position: absolute; width: 0; height: 0; }

/* icon paint */
.w { fill: url(#paper); stroke: #2c2c2c; }
.wp { fill: #f6f6f6; }
.b { fill: url(#steel); stroke: #0f3950; }
.l { fill: #86c9ea; stroke: #0f3950; }
.d { fill: #2c7ba4; stroke: #0f3950; }
.g { fill: #a9a9a9; stroke: #555; }
.y { fill: #fbd23c; stroke: #7a5300; }
.green { fill: #3d9c1f; stroke: #17540a; }
.k { fill: none; stroke: #222; }
.f { fill: none; stroke: #777; }
.kf { fill: #151515; }
.thick { stroke-width: 2; }
.wire { fill: none; stroke: #1c1c1c; }
.wire.hi { stroke: #b5b5b5; }
.wire.lite { stroke: #aaa; }
.tube1 { fill: none; stroke: #0f3950; stroke-width: 8; stroke-linecap: round; }
.tube2 { fill: none; stroke: #4f9fc8; stroke-width: 6; stroke-linecap: round; }
.c1 { fill: none; stroke: #c9dfea; stroke-width: 5; }
.c2 { fill: none; stroke: #2f7ea8; stroke-width: 3; }
.c3 { fill: none; stroke: #3c8ab2; stroke-width: 3; }
.c4 { fill: none; stroke: #ddd; stroke-width: 5; }
.glyph { font: 22px "Open Sans", sans-serif; fill: #222; }
.glyph.serif { font-family: "Liberation Serif", serif; }

/* title bar */
.titlebar { display: flex; align-items: center; height: 47px; padding-left: 10px; border-bottom: 1px solid #8a8a8a; }
.logo { display: flex; align-items: center; gap: 4px; width: 187px; height: 46px; padding-left: 7px; background: linear-gradient(#ffffff, #d9d9d9); }
.logo-mark { width: 36px; height: 36px; flex: none; }
.logo-text { color: #d8291f; font: italic 300 21px Lato, sans-serif; padding-top: 10px; padding-left: 3px; }
.logo-text b { font-weight: 900; }
.flyout { width: 21px; height: 46px; display: grid; place-items: center; }
.flyout::before { content: ""; border: 7px solid transparent; border-left: 8px solid #111; border-right: 0; filter: drop-shadow(0 0 1px #ccc); }
.quick { display: flex; align-items: center; border-left: 1px solid #3a3a3a; padding-left: 31px; height: 46px; }
.q, .q svg { width: 32px; height: 32px; display: block; }
.solo { margin-right: 6px; }
.caret { width: 14px; height: 32px; display: grid; place-items: center; flex: none; }
.caret.wide { width: 19px; }
.caret::before { content: ""; border: 4px solid transparent; border-top-color: #f4f4f4; border-bottom: 0; }
.doc { margin: 0 292px 0 auto; font-size: 13px; font-weight: 400; color: #d6d6d6; white-space: nowrap; }

/* ribbon */
.ribbon-row { height: 45px; padding-right: 111px; }
.ribbon { height: 45px; display: flex; align-items: center; padding-left: 5px; border-bottom: 1px solid #8a8a8a; border-right: 1px solid #8a8a8a; }
.t { width: 38px; height: 36px; flex: none; display: grid; place-items: center; }
.t svg { width: 30px; height: 30px; filter: drop-shadow(0 0 1px #aaa); }
.sep { width: 1px; height: 38px; margin: 0 1px; background: #c4c4c4; flex: none; }

/* working area */
.work { flex: 1; display: grid; grid-template-columns: 409px 1fr; }
.side { border-right: 1px solid #8a8a8a; display: flex; flex-direction: column; }
.tabs { display: flex; height: 28px; }
.tab { height: 28px; padding: 0 9px; background: #323232; border: solid #8a8a8a; border-width: 0 1px 1px 0; }
.tab.active { background: none; font-weight: 700; }
.tab.hover { background: #a5a5a5; }
.docks { flex: 1; display: flex; align-items: flex-start; }
.dock { display: flex; flex-direction: column; align-items: center; border-bottom: 1px solid #9a9a9a; }
.dock::before { content: ""; align-self: stretch; margin: 1px 2px 9px; border-top: 3px dotted #d0d0d0; }
.first { width: 44px; padding-bottom: 7px; }
.second { width: 44px; border-left: 1px solid #9a9a9a; padding-bottom: 7px; }
.second hr { width: 38px; height: 2px; margin: 3px 0; border: 0; background: #222; border-bottom: 1px solid #777; }
.v { width: 38px; height: 38px; display: grid; place-items: center; }
.v svg { width: 32px; height: 32px; }
.off { opacity: .35; }
.second .off { opacity: .5; }

/* feature panel */
.panel { flex: 1; align-self: stretch; margin-left: 1px; padding-right: 2px; padding-top: 2px; display: flex; flex-direction: column; }
.grip { height: 16px; border: solid #b8b8b8; border-width: 1px 0; display: grid; place-items: center; }
.dot { width: 5px; height: 5px; border-radius: 50%; background: #e2e2e2; }
.ptabs { display: flex; height: 38px; margin-top: 4px; }
.ptab { width: 52px; background: #333; border: solid #8a8a8a; border-width: 1px 1px 0 0; display: grid; place-items: center; }
.ptab.on { background: none; }
.ptab svg { width: 30px; height: 30px; }
.more { margin-left: auto; padding-right: 3px; }
.more svg { width: 10px; height: 12px; fill: none; stroke: #f0f0f0; stroke-width: 1; }
.filter { display: flex; align-items: center; height: 32px; margin: 0 1px 0 3px; padding-left: 2px; border: 1px solid #d0d0d0; }
.filter svg { width: 16px; height: 18px; }
.filter input { flex: 1; min-width: 0; height: 28px; border: 0; background: none; color: inherit; font: inherit; }
.list { flex: 1; display: flex; }
.tree { flex: 1; list-style: none; margin: 0; padding: 0; border-bottom: 3px solid #2558c4; }
.tree li { display: flex; align-items: center; gap: 5px; height: 24px; padding-left: 25px; white-space: nowrap; }
.tree li.sub { padding-left: 48px; }
.tree li:has(.tw) { padding-left: 5px; }
.tree svg { width: 18px; height: 18px; flex: none; }
.tw { width: 10px; height: 24px; margin-right: 5px; display: grid; place-items: center; }
.tw::before { content: ""; border: 4px solid transparent; border-left: 5px solid #f4f4f4; border-right: 0; }
.tw.down::before { border: 4px solid transparent; border-top: 5px solid #f4f4f4; border-bottom: 0; }
.scroll { width: 18px; background: #efefef; display: flex; flex-direction: column; align-items: center; }
.scroll .up { margin: 8px 0 112px; border: 5px solid transparent; border-bottom-color: #222; border-top: 0; }
.scroll .dn { margin: 8px 0 3px; border: 5px solid transparent; border-top-color: #333; border-bottom: 0; }
.thumb { flex: 1; width: 17px; border: 1px solid #999; border-radius: 2px; background: linear-gradient(90deg, #f3f3f3, #dcdcdf 50%, #b9b9bf); display: grid; place-items: center; }
.thumb i { width: 9px; height: 10px; background: repeating-linear-gradient(#444 0 1px, #f4f4f4 1px 4px); }

/* graphics area */
.view { position: relative; display: flex; }
.model { flex: 1; width: 100%; height: 100%; min-width: 0; }
.edge { fill: none; stroke: #0a0a0a; }
.dash { stroke-dasharray: 7 2 2 2; }
.heads-up { position: absolute; top: 3px; right: 10px; display: flex; }
.heads-up .t, .heads-up .caret { height: 36px; opacity: .85; }
.heads-up .caret::before { border-top-color: #7c7c7c; }
.handle { position: absolute; left: -1px; top: 49%; width: 12px; height: 49px; border: 1px solid #8a8a8a; border-left-color: #4a4a4a; display: grid; place-items: center; }
```
